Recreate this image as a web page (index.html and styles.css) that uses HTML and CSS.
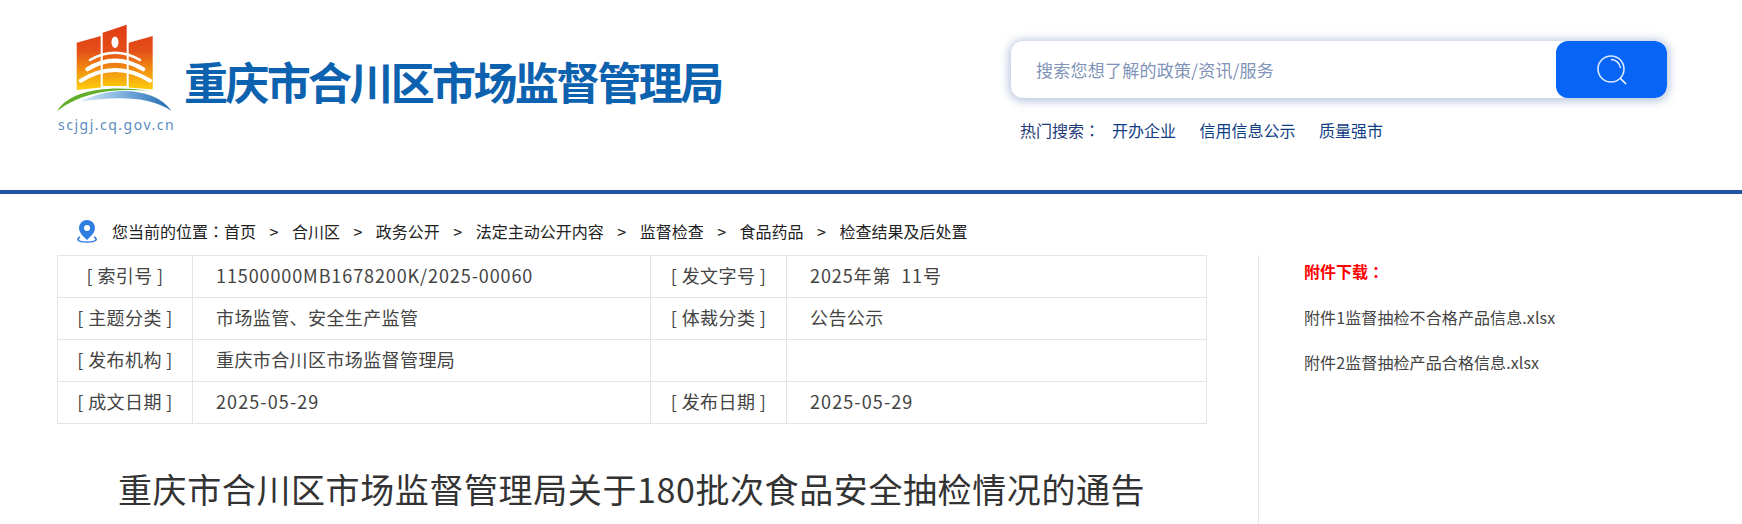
FILE: index.html
```html
<!DOCTYPE html>
<html lang="zh-CN">
<head>
<meta charset="utf-8">
<title>重庆市合川区市场监督管理局</title>
<link rel="stylesheet" href="styles.css">
</head>
<body>
<header class="header">
  <div class="brand">
    <div class="logo">
      <svg class="logo-mark" width="120" height="90" viewBox="0 0 120 90">
        <defs>
          <linearGradient id="lg" x1="0" y1="0" x2="0" y2="1">
            <stop offset="0" stop-color="#e03a14"/>
            <stop offset=".4" stop-color="#e44f18"/>
            <stop offset=".72" stop-color="#f49a10"/>
            <stop offset="1" stop-color="#fdd60a"/>
          </linearGradient>
          <linearGradient id="lb" x1="0" y1="0" x2="1" y2="0">
            <stop offset="0" stop-color="#dcebf7"/>
            <stop offset=".45" stop-color="#7fb2de"/>
            <stop offset="1" stop-color="#1f68b0"/>
          </linearGradient>
          <clipPath id="panels">
            <path d="M22.700 18.700 46.700 12V63.500L22.700 66Z M48.700 8.700 72.700 .7V62H48.700Z M74.700 18.700 98.700 12V65.500L74.700 63.500Z"/>
          </clipPath>
        </defs>
        <rect x="20" y="0" width="82" height="68" fill="url(#lg)" clip-path="url(#panels)"/>
        <ellipse cx="61" cy="18.300" rx="3.500" ry="5.700" fill="#fff"/>
        <g fill="none" stroke="#fff" stroke-linecap="round">
          <path d="M36 36Q61 21.400 86 36" stroke-width="2.600"/>
          <path d="M33.300 45.300Q61 28 89.300 45.300" stroke-width="4"/>
          <path d="M26.700 56.700Q61 35.300 96 56.700" stroke-width="4"/>
        </g>
        <path d="M3.300 87C14 68 50 60 96 67 60 64 28 68 3.300 87Z" fill="#62ad2a"/>
        <path d="M26 77.700C55 62 100 62 117.700 87 96 72 62 72 26 77.700Z" fill="url(#lb)"/>
      </svg>
      <span class="logo-url">scjgj.cq.gov.cn</span>
    </div>
    <h1 class="site-name">重庆市合川区市场监督管理局</h1>
  </div>
  <div class="search-area">
    <div class="search-box">
      <span class="search-text">搜索您想了解的政策/资讯/服务</span>
      <span class="search-btn">
        <svg width="32" height="32" viewBox="0 0 32 32" fill="none" stroke="#fff">
          <circle cx="15" cy="15" r="13" stroke-width="1.600" stroke-opacity=".85"/>
          <path d="M15 5.500A9.500 9.500 0 0 1 24.500 14" stroke-width="1.400"/>
          <path d="M24.500 24.500 30 30" stroke-width="1.600"/>
        </svg>
      </span>
    </div>
    <div class="hot">
      <span class="hot-label">热门搜索<span class="colon" lang="zh-TW">：</span></span>
      <a class="hot-link">开办企业</a>
      <a class="hot-link">信用信息公示</a>
      <a class="hot-link">质量强市</a>
    </div>
  </div>
</header>
<nav class="crumbs">
  <svg width="22" height="24" viewBox="0 0 22 24">
    <path d="M11 1a8 8 0 0 0-8 8c0 5 5 9 8 12 3-3 8-7 8-12a8 8 0 0 0-8-8Z" fill="#2f7de1"/>
    <circle cx="11" cy="9" r="3" fill="#fff"/>
    <path d="M4 18c-4 2-3 5 7 5s11-3 7-5" fill="none" stroke="#2f7de1" stroke-width="1.600"/>
  </svg>
  <span>您当前的位置<span class="colon" lang="zh-TW">：</span>首页</span><i>&gt;</i><span>合川区</span><i>&gt;</i><span>政务公开</span><i>&gt;</i><span>法定主动公开内容</span><i>&gt;</i><span>监督检查</span><i>&gt;</i><span>食品药品</span><i>&gt;</i><span>检查结果及后处置</span>
</nav>
<div class="content">
  <main class="main">
    <table class="meta">
      <tr><th>[ 索引号 ]</th><td class="num">11500000MB1678200K/2025-00060</td><th>[ 发文字号 ]</th><td class="num">2025年第&nbsp; 11号</td></tr>
      <tr><th>[ 主题分类 ]</th><td>市场监管、安全生产监管</td><th>[ 体裁分类 ]</th><td>公告公示</td></tr>
      <tr><th>[ 发布机构 ]</th><td>重庆市合川区市场监督管理局</td><th></th><td></td></tr>
      <tr><th>[ 成文日期 ]</th><td class="date">2025-05-29</td><th>[ 发布日期 ]</th><td class="date">2025-05-29</td></tr>
    </table>
    <h2 class="title">重庆市合川区市场监督管理局关于180批次食品安全抽检情况的通告</h2>
  </main>
  <aside class="side">
    <p class="side-head">附件下载<span class="colon" lang="zh-TW">：</span></p>
    <p class="side-item">附件1监督抽检不合格产品信息.xlsx</p>
    <p class="side-item">附件2监督抽检产品合格信息.xlsx</p>
  </aside>
</div>
</body>
</html>
```
FILE: styles.css
```css
* { box-sizing: border-box; }
html, body { margin: 0; height: 524px; overflow: hidden; background: #fff; }
body { font-family: "Noto Sans CJK SC", sans-serif; color: #333; }
.colon { font-family: "Noto Sans CJK TC", sans-serif; }
.header { height: 194px; border-bottom: 4px solid #20539f; display: flex; justify-content: space-between; padding: 24px 0 0 54px; }
.brand { display: flex; align-items: flex-start; }
.logo { width: 124px; display: flex; flex-direction: column; }
.logo-mark { display: block; }
.logo-url { font-family: "Noto Sans", sans-serif; font-size: 14px; letter-spacing: 1.500px; color: #5b8cc0; margin: 1px 0 0 4px; white-space: nowrap; }
.site-name { margin: 27px 0 0 6px; font-size: 44px; line-height: 60px; font-weight: 700; color: #0d62b0; letter-spacing: -2.650px; }
.search-area { width: 656px; margin: 17px 75px 0 0; }
.search-box { height: 57px; background: #fff; border-radius: 12px; box-shadow: 0 1px 10px 2px rgba(60,95,160,.38); display: flex; justify-content: space-between; align-items: center; overflow: hidden; }
.search-text { margin-left: 25px; font-size: 17px; letter-spacing: .25px; color: #7f93b8; }
.search-btn { width: 111px; height: 57px; background: #0664f6; display: flex; align-items: center; justify-content: center; border-radius: 12px; }
.hot { margin: 21px 0 0 9px; font-size: 16px; line-height: 22px; color: #1f3a7a; display: flex; }
.hot-label { width: 92px; }
.hot-link { margin-right: 23.500px; color: #0f3d86; }
.crumbs { height: 61px; padding: 22px 0 10px 76px; display: flex; align-items: center; font-size: 16px; color: #222; }
.crumbs svg { margin-right: 14px; }
.crumbs i { font-style: normal; margin: 0 13.500px; }
.content { display: flex; padding-left: 57px; }
.main { width: 1150px; }
.meta { width: 1150px; border-collapse: collapse; table-layout: fixed; font-size: 18px; letter-spacing: .4px; line-height: 20px; color: #444; }
.meta th, .meta td { height: 42px; border: 1px solid #e4e4e4; padding: 0 0 3px; font-weight: 400; }
.meta th { width: 135px; text-align: center; }
.meta th:nth-child(3) { width: 136px; }
.meta tr > td:nth-child(2) { width: 458px; }
.meta td { padding-left: 23px; }
.meta .num { letter-spacing: .9px; }
.meta .date { letter-spacing: 1.100px; }
.title { margin: 40px 0 0 61px; font-size: 34px; line-height: 50px; font-weight: 400; letter-spacing: .6px; color: #333; white-space: nowrap; }
.side { margin-left: 51px; border-left: 1px solid #e6e6e6; height: 270px; padding: 5px 0 0 45px; font-size: 16px; }
.side p { margin: 0; line-height: 22px; }
.side .side-head { color: #f00; font-weight: 700; margin-bottom: 24px; }
.side .side-item { margin-bottom: 23px; letter-spacing: .1px; color: #444; }
```
